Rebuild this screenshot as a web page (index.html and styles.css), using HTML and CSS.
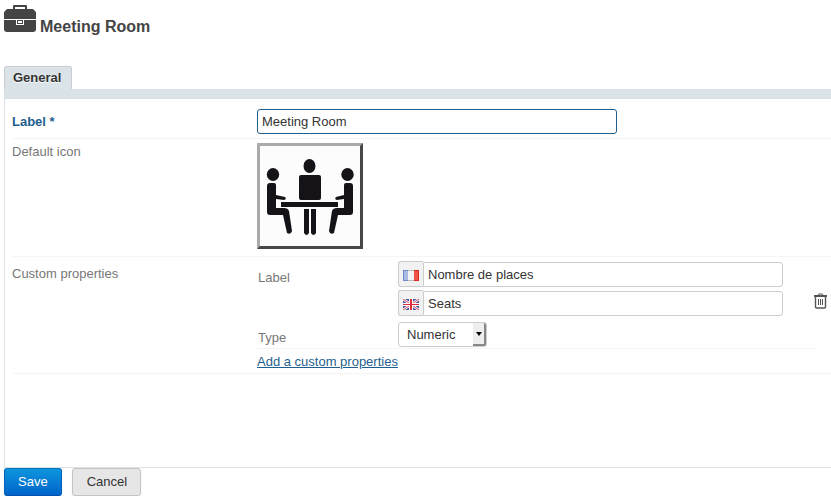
FILE: index.html
```html
<!DOCTYPE html>
<html lang="en">
<head>
<meta charset="utf-8">
<title>Meeting Room</title>
<link rel="stylesheet" href="styles.css">
</head>
<body>
<header class="heading">
  <svg class="heading-icon" viewBox="0 0 32 28" aria-hidden="true">
    <path fill="#444" fill-rule="evenodd" d="M9 4V1q0-1 1-1h12q1 0 1 1v3h6l3 3v7H0V7l3-3zM11 4h10V2H11z"/>
    <path fill="#444" fill-rule="evenodd" d="M0 15h12v5h8v-5h12v9q0 3-3 3H3q-3 0-3-3zM13 15h6v4h-6zM14 16v2h4v-2z"/>
  </svg>
  <h1>Meeting Room</h1>
</header>

<nav class="tabs"><a class="tab" href="#general">General</a></nav>

<form>
  <section class="panel" id="general">
    <div class="row row-label">
      <label class="name required" for="label">Label *</label>
      <input class="field main-field" id="label" type="text" value="Meeting Room">
    </div>
    <div class="row row-icon">
      <span class="name">Default icon</span>
      <button class="icon-picker" type="button" aria-label="Default icon">
        <svg viewBox="0 0 100 100" aria-hidden="true">
          <g fill="#151318">
            <ellipse cx="13" cy="28.500" rx="6.200" ry="6.500"/>
            <ellipse cx="49.500" cy="20" rx="6" ry="7"/>
            <ellipse cx="87.500" cy="28.500" rx="6.200" ry="6.500"/>
            <rect x="39" y="29" width="22" height="25" rx="2"/>
            <rect x="21" y="56" width="57" height="5"/>
            <path d="M10 37h4q2 0 2 2v10l9 2q2 2-1 3l-8-1v9h8q4 0 5 3l3 20q-1 4-5 2l-4-18H10q-3 0-3-3V40q0-3 3-3zM90 37h-4q-2 0-2 2v10l-8 2q-2 2 1 3l7-1v9h-7q-4 0-5 3l-3 20q1 4 5 2l4-18h12q3 0 3-3V40q0-3-3-3z"/>
            <path d="M44 63h5v24q-2.500 4-5 0zM51 63h5v24q-2.500 4-5 0z"/>
          </g>
        </svg>
      </button>
    </div>
    <div class="row row-custom">
      <span class="name">Custom properties</span>
      <div class="custom">
        <div class="property">
          <div class="property-fields">
            <div class="property-row names">
              <label class="name" for="name-fr">Label</label>
              <div class="translations">
                <div class="translation">
                  <span class="flag"><svg viewBox="0 0 16 11" role="img" aria-label="French">
                    <path fill="#6f8bd0" d="M0 0h6v11H0z"/><path fill="#a9bbe5" d="M1 1h4v9H1z"/><path fill="#f4f4f4" d="M5 0h6v11H5z"/><path fill="#bbb" d="M5 0h6v1H5zM5 10h6v1H5z"/><path fill="#dc2a20" d="M11 0h5v11h-5z"/><path fill="#ee5548" d="M11 1h4v9h-4z"/>
                  </svg></span>
                  <input class="field" id="name-fr" type="text" value="Nombre de places">
                </div>
                <div class="translation">
                  <span class="flag"><svg viewBox="0 0 16 11" role="img" aria-label="English">
                    <path fill="#4257a5" d="M0 0h16v11H0z"/><path stroke="#fff" stroke-width="2.400" d="M0 0l16 11M16 0L0 11"/><path stroke="#dc4a55" d="M0 0l16 11M16 0L0 11"/><path fill="#fff" d="M6 0h4v11H6zM0 4h16v3H0z"/><path fill="#dc2c3c" d="M7 0h2v11H7zM0 5h16v1H0z"/>
                  </svg></span>
                  <input class="field" type="text" aria-label="English label" value="Seats">
                </div>
              </div>
            </div>
            <div class="property-row type">
              <label class="name" for="type">Type</label>
              <div class="select">
                <select id="type"><option>Numeric</option></select>
                <span class="select-arrow" aria-hidden="true"></span>
              </div>
            </div>
          </div>
          <button class="delete" type="button" aria-label="Delete property">
            <svg viewBox="0 0 13 16" fill="none" stroke="#555" aria-hidden="true">
              <path d="M4 2.500q0-1.500 1-1.500h3q1 0 1 1.500"/><path stroke-width="2" d="M0 3h13"/><path stroke-width="1.400" d="M1.500 4v10q0 1 1 1h8q1 0 1-1V4"/><path d="M4.500 6v6M6.500 6v6M8.500 6v6"/>
            </svg>
          </button>
        </div>
        <a class="add" href="#add">Add a custom properties</a>
      </div>
    </div>
  </section>
  <footer class="actions">
    <button class="button primary" type="submit">Save</button>
    <button class="button" type="button">Cancel</button>
  </footer>
</form>
</body>
</html>
```
FILE: styles.css
```css
* { box-sizing: border-box; }

body {
  margin: 0;
  padding: 5px 0 0 4px;
  background: #fff;
  color: #333;
  font: 13px/18px "Liberation Sans", Arial, sans-serif;
}

input, button, select { font: inherit; color: inherit; }
svg { display: block; }

.heading {
  display: flex;
  align-items: flex-end;
  gap: 4px;
  height: 61px;
  padding-bottom: 29px;
}
.heading-icon { width: 32px; height: 28px; margin-bottom: 4px; }
h1 { margin: 0; font-size: 16px; line-height: 20px; color: #444; }

.tabs { display: flex; border-bottom: 10px solid #dae3e8; }
.tab {
  padding: 2px 10px 3px 8px;
  border: 1px solid #ccc;
  border-bottom: 0;
  border-radius: 3px 3px 0 0;
  background: #dae3e8;
  color: #333;
  font-weight: bold;
  line-height: 17px;
  text-decoration: none;
  text-shadow: 0 1px 0 #fff;
}

.panel {
  min-height: 369px;
  padding: 5px 0 0 7px;
  border: solid #dae3e8;
  border-width: 0 0 1px 1px;
}
.row {
  display: grid;
  grid-template-columns: 245px minmax(0, 1fr);
  border-bottom: 1px solid #f5f5f5;
}
.name { color: #777; }
.required { color: #1f5f8f; font-weight: bold; }

.row-label { padding: 5px 0 4px; align-items: center; }
.row-icon { padding: 4px 0 7px; align-items: start; }
.row-custom { padding: 4px 0 2px; align-items: start; }
.row-custom > .name { padding-top: 4px; }

.field {
  width: 100%;
  height: 25px;
  padding: 0 4px;
  border: 1px solid #ccc;
  border-radius: 3px;
  background: #fff;
}
.main-field { max-width: 360px; border-color: #1f5f8f; }

.icon-picker {
  width: 106px;
  height: 106px;
  padding: 0;
  border: 3px solid;
  border-color: #aaa #484848 #484848 #aaa;
  background: #fcfcfc;
}

.property { display: flex; align-items: center; justify-content: space-between; }
.property-fields {
  flex: 1;
  margin-right: -2px;
  border-bottom: 1px solid #f5f5f5;
}
.property-row {
  display: grid;
  grid-template-columns: 140px minmax(0, 385px);
  padding-left: 1px;
}
.property-row .name { padding-top: 8px; }
.translations { display: grid; gap: 3px; }
.translation { display: flex; height: 26px; }
.translation .field { align-self: flex-end; border-radius: 0 3px 3px 0; }
.flag {
  flex: none;
  display: grid;
  place-items: center;
  width: 25px;
  padding-top: 2px;
  border: 1px solid #ccc;
  border-right: 0;
  border-radius: 3px 0 0 3px;
  background: #f2f2f2;
}
.flag svg { width: 16px; height: 11px; }

.type { margin-top: 6px; }
.type .name { padding-top: 7px; }
.select { position: relative; width: 89px; height: 26px; }
.select select {
  width: 100%;
  height: 25px;
  padding: 0 8px;
  border: 1px solid #ccc;
  border-radius: 3px;
  background: #fff;
  appearance: none;
}
.select-arrow {
  position: absolute;
  top: 1px;
  right: 1px;
  display: grid;
  place-items: center;
  width: 13px;
  height: 23px;
  border: solid #888;
  border-width: 0 2px 2px 0;
  border-radius: 0 2px 2px 0;
  background: #eee;
  pointer-events: none;
}
.select-arrow::after {
  content: "";
  border: 3px solid transparent;
  border-top: 4px solid #000;
  border-bottom: 0;
}

.delete { margin: 0 4px 8px 0; padding: 0; border: 0; background: none; }
.delete svg { width: 13px; height: 16px; }
.add { display: inline-block; padding-top: 4px; color: #1f5f8f; }

.actions { display: flex; gap: 10px; }
.button {
  height: 28px;
  padding: 0 13px 0 14px;
  border: 1px solid #c4c4c4;
  border-radius: 3px;
  background: #e6e6e6;
  box-shadow: 0 1px 2px #0001;
}
.primary {
  padding: 0 13px;
  border-color: #0874bd #0060b8 #0050b0;
  background: linear-gradient(#0d95dc, #0064cc);
  color: #fff;
}
```
